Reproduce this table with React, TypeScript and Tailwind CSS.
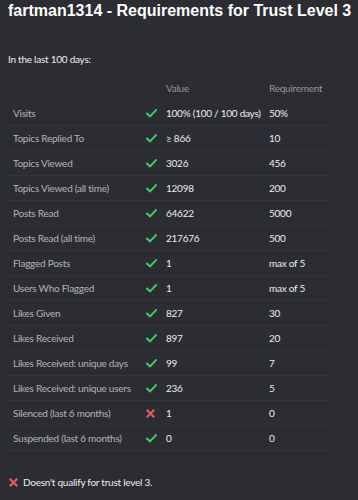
import React from "react";

type Row = { label: string; value: string; req: string; ok: boolean };

const rows: Row[] = [
  { label: "Visits", value: "100% (100 / 100 days)", req: "50%", ok: true },
  { label: "Topics Replied To", value: "≥ 866", req: "10", ok: true },
  { label: "Topics Viewed", value: "3026", req: "456", ok: true },
  { label: "Topics Viewed (all time)", value: "12098", req: "200", ok: true },
  { label: "Posts Read", value: "64622", req: "5000", ok: true },
  { label: "Posts Read (all time)", value: "217676", req: "500", ok: true },
  { label: "Flagged Posts", value: "1", req: "max of 5", ok: true },
  { label: "Users Who Flagged", value: "1", req: "max of 5", ok: true },
  { label: "Likes Given", value: "827", req: "30", ok: true },
  { label: "Likes Received", value: "897", req: "20", ok: true },
  { label: "Likes Received: unique days", value: "99", req: "7", ok: true },
  { label: "Likes Received: unique users", value: "236", req: "5", ok: true },
  { label: "Silenced (last 6 months)", value: "1", req: "0", ok: false },
  { label: "Suspended (last 6 months)", value: "0", req: "0", ok: true },
];

const Check = () => (
  <svg width="11" height="9" viewBox="0 0 11 9" fill="none">
    <path d="M1 4.6L4 7.4L10 1.2" stroke="#3fcf68" strokeWidth="2" strokeLinecap="square" />
  </svg>
);

const Cross = () => (
  <svg width="9" height="9" viewBox="0 0 9 9" fill="none">
    <path d="M1.5 1.5L7.5 7.5M7.5 1.5L1.5 7.5" stroke="#e55b5b" strokeWidth="2.2" strokeLinecap="square" />
  </svg>
);

export default function App() {
  return (
    <div className="w-[358px] h-[500px] bg-[#2c2d32] overflow-hidden font-['Lato',sans-serif] text-[10px] tracking-[-0.25px]">
      <h1 className="pl-2 pt-[1px] font-['Liberation_Sans',Arial,sans-serif] font-bold text-[16px] leading-[20px] tracking-normal text-white whitespace-nowrap">
        fartman1314 - Requirements for Trust Level 3
      </h1>

      <p className="mt-[30px] pl-2 leading-4 text-[#ececec]">In the last 100 days:</p>

      <div className="mt-[9px] mx-2 w-[322px]">
        <div className="grid grid-cols-[138px_20px_103px_1fr] h-[25px] items-center text-[#94959a]">
          <span />
          <span />
          <span>Value</span>
          <span>Requirement</span>
        </div>
        {rows.map((r) => (
          <div
            key={r.label}
            className="grid grid-cols-[138px_20px_103px_1fr] h-[25px] items-center border-b border-[#35363b]"
          >
            <span className="pl-[5px] text-[#b3b4b8] whitespace-nowrap">{r.label}</span>
            <span className="flex items-center">{r.ok ? <Check /> : <Cross />}</span>
            <span className="text-[#ececec] whitespace-nowrap">{r.value}</span>
            <span className="text-[#ececec] whitespace-nowrap">{r.req}</span>
          </div>
        ))}
      </div>

      <div className="mt-[23px] pl-[9px] flex items-center gap-[5px] leading-4 text-[#ececec]">
        <Cross />
        <span>Doesn't qualify for trust level 3.</span>
      </div>
    </div>
  );
}
